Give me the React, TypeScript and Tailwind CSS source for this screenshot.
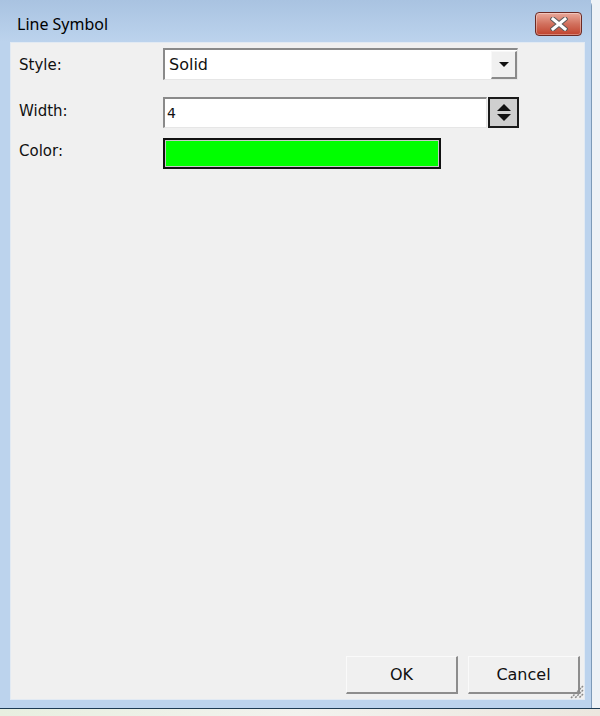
import React from 'react';

const uiFont = { fontFamily: '"DejaVu Sans", "Liberation Sans", sans-serif' };

function CloseButton() {
  return (
    <div className="w-[47px] h-[24px] rounded-[4px] border border-[#6b2a24] bg-gradient-to-b from-[#e9a99b] via-[#d1705d] to-[#c0412c] flex items-center justify-center shadow-[inset_0_0_0_1px_rgba(255,255,255,0.35)]">
      <svg width="18" height="14" viewBox="0 0 18 14">
        <path d="M3 2 L15 12 M15 2 L3 12" stroke="#5a5a5a" strokeWidth="5" strokeLinecap="square" />
        <path d="M3 2 L15 12 M15 2 L3 12" stroke="#ffffff" strokeWidth="3" strokeLinecap="square" />
      </svg>
    </div>
  );
}

function SunkenBox({ className, children }: { className: string; children?: React.ReactNode }) {
  return (
    <div className={`border-t-2 border-l-2 border-b border-r border-t-[#8a8a8a] border-l-[#8a8a8a] border-b-[#e6e6e6] border-r-[#e6e6e6] bg-white flex items-center ${className}`}>
      {children}
    </div>
  );
}

export default function App() {
  return (
    <div className="w-[600px] h-[716px] bg-[#eef2f6] flex flex-col" style={uiFont}>
      <div className="flex h-[708px]">
        {/* Window */}
        <div className="w-[592px] h-[708px] flex flex-col bg-[#bcd3ed] rounded-tr-[6px] border-r border-[#7d9ab8]">
          {/* Title bar */}
          <div className="h-[42px] flex items-start justify-between bg-gradient-to-b from-[#a9c3e1] to-[#bcd3ed]">
            <div className="pl-[17px] pt-[16px] text-[16px] text-black leading-none" style={{ fontFamily: '"Noto Sans", "DejaVu Sans", sans-serif' }}>Line Symbol</div>
            <div className="pt-[12px] pr-[9px]">
              <CloseButton />
            </div>
          </div>
          {/* Body */}
          <div className="flex flex-1 pl-[10px] pr-[6px] pb-[8px]">
            <div className="flex-1 bg-[#f0f0f0] border border-[#e2eaf3] flex flex-col relative">
              <div className="flex flex-col pt-[5px] pl-[8px] text-[15px] text-[#111]">
                {/* Style row */}
                <div className="flex items-center h-[32px]">
                  <div className="w-[144px] mt-[2px]">Style:</div>
                  <SunkenBox className="w-[355px] h-[32px] pl-[4px] justify-between">
                    <span className="text-[16px] mt-[1px]">Solid</span>
                    <div className="w-[26px] h-[28px] bg-[#f0f0f0] border-t border-l border-[#f8f8f8] border-b-2 border-r-2 border-b-[#8a8a8a] border-r-[#8a8a8a] flex items-center justify-center">
                      <svg width="12" height="7" viewBox="0 0 12 7"><path d="M1 1 L11 1 L6 6 Z" fill="#111" /></svg>
                    </div>
                  </SunkenBox>
                </div>
                {/* Width row */}
                <div className="flex items-center mt-[17px] h-[31px]">
                  <div className="w-[144px] -mt-[3px]">Width:</div>
                  <SunkenBox className="w-[324px] h-[31px] pl-[2px]">
                    <span className="text-[14px]">4</span>
                  </SunkenBox>
                  <div className="ml-[1px] w-[31px] h-[31px] border-2 border-[#1a1a1a] bg-[#cfcfcf] flex flex-col items-center justify-center gap-[3px]">
                    <svg width="16" height="8" viewBox="0 0 16 8"><path d="M1 8 L8 1 L15 8 Z" fill="#111" /></svg>
                    <svg width="16" height="8" viewBox="0 0 16 8"><path d="M1 0 L15 0 L8 7 Z" fill="#111" /></svg>
                  </div>
                </div>
                {/* Color row */}
                <div className="flex items-center mt-[10px] h-[31px]">
                  <div className="w-[144px] -mt-[4px]">Color:</div>
                  <div className="w-[278px] h-[31px] border-2 border-[#111] p-[1px] bg-[#c8c8c8]">
                    <div className="w-full h-full bg-[#00ff00]" />
                  </div>
                </div>
              </div>
              <div className="flex-1" />
              {/* Buttons */}
              <div className="flex justify-end gap-[10px] pr-[4px] pb-[5px]">
                <button className="w-[112px] h-[38px] bg-[#f0f0f0] border-t border-l border-[#fafafa] border-b-2 border-r-2 border-b-[#8d8d8d] border-r-[#8d8d8d] text-[16px] text-[#111]">OK</button>
                <button className="w-[112px] h-[38px] bg-[#f0f0f0] border-t border-l border-[#fafafa] border-b-2 border-r-2 border-b-[#8d8d8d] border-r-[#8d8d8d] text-[16px] text-[#111]">Cancel</button>
              </div>
              {/* Size grip */}
              <svg className="absolute right-[0px] bottom-[0px]" width="16" height="16" viewBox="0 0 16 16">
                <path d="M15 3 L3 15 M15 7 L7 15 M15 11 L11 15" stroke="#8a8a8a" strokeWidth="1.5" strokeDasharray="2 1" />
              </svg>
            </div>
          </div>
        </div>
        <div className="flex-1 bg-[#eef2f6]" />
      </div>
      <div className="h-[1px] bg-[#1d3a52]" />
      <div className="flex-1 bg-gradient-to-r from-[#e8efe0] via-[#f2f2ee] to-[#ece7df]" />
    </div>
  );
}
